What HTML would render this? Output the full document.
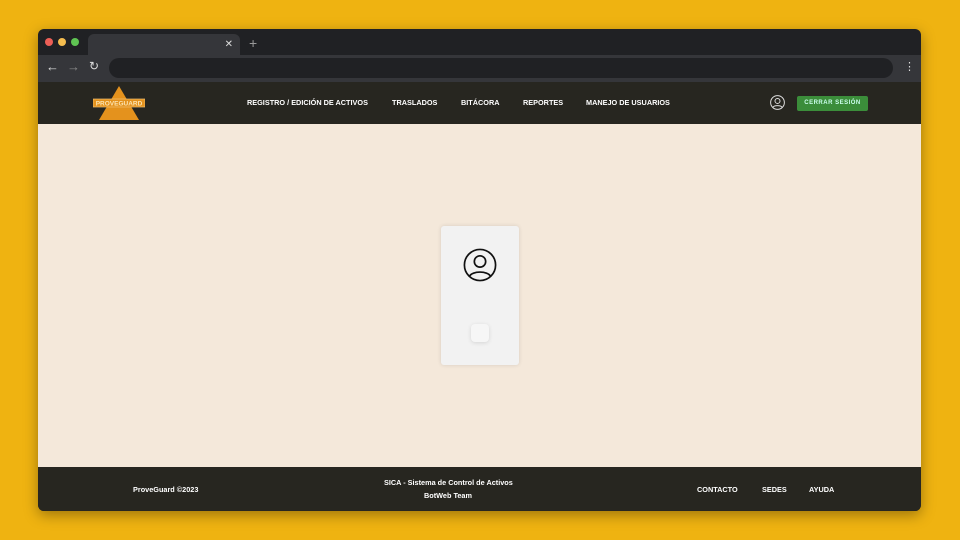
<!DOCTYPE html><html><head><style>
body{margin:0;width:960px;height:540px;background:#efb311;position:relative;overflow:hidden;font-family:"Liberation Sans",sans-serif}
.win{position:absolute;left:38px;top:29px;width:883px;height:482px;background:#202124;border-radius:6px;overflow:hidden;box-shadow:0 4px 14px rgba(0,0,0,.35)}
.tab{position:absolute;left:50px;top:5px;width:152px;height:22px;background:#35363a;border-radius:6px 6px 0 0;color:#ddd;font-size:10px}
.bar{position:absolute;left:0;top:26px;width:883px;height:27px;background:#35363a}
.url{position:absolute;left:71px;top:3px;width:784px;height:20px;background:#202124;border-radius:10px}
.nav{position:absolute;left:0;top:53px;width:883px;height:42px;background:#272620;color:#fff;font-weight:bold;font-size:7.3px}
.nav span{position:absolute;top:16px}
.main{position:absolute;left:0;top:95px;width:883px;height:343px;background:#f4e8da}
.foot{position:absolute;left:0;top:438px;width:883px;height:44px;background:#272620;color:#fff;font-weight:bold;font-size:7.3px}
.foot span{position:absolute}
</style></head><body><div class="win">
<div style="position:absolute;left:7px;top:9px;width:8px;height:8px;border-radius:50%;background:#ed5f57"></div>
<div style="position:absolute;left:20px;top:9px;width:8px;height:8px;border-radius:50%;background:#f5bd4f"></div>
<div style="position:absolute;left:33px;top:9px;width:8px;height:8px;border-radius:50%;background:#5fc453"></div>
<div class="tab"><span style="position:absolute;right:7px;top:5px">✕</span></div>
<span style="position:absolute;left:211px;top:6px;color:#999;font-size:14px">+</span>
<div class="bar"><span style="position:absolute;left:8px;top:4px;color:#ddd;font-size:13px">←</span><span style="position:absolute;left:29px;top:4px;color:#888;font-size:13px">→</span><span style="position:absolute;left:51px;top:4px;color:#ddd;font-size:12px">↻</span><div class="url"></div><span style="position:absolute;left:866px;top:5px;color:#ddd;font-size:11px">⋮</span></div>
<div class="nav">
<svg style="position:absolute;left:55px;top:3px" width="52" height="36"><polygon points="26,1 6,35 46,35" fill="#e4921d"/><rect x="0" y="14" width="52" height="8" fill="#e4921d" stroke="#f2c070" stroke-width=".7"/><text x="26" y="20.5" font-size="6.5" fill="#fbe3b0" text-anchor="middle" font-family="Liberation Sans">PROVEGUARD</text></svg>
<span style="left:209px">REGISTRO / EDICIÓN DE ACTIVOS</span><span style="left:354px">TRASLADOS</span><span style="left:423px">BITÁCORA</span><span style="left:485px">REPORTES</span><span style="left:548px">MANEJO DE USUARIOS</span>
<svg style="position:absolute;left:732px;top:13px" width="15" height="15" viewBox="0 0 24 24" fill="none" stroke="#ddd" stroke-width="1.6"><circle cx="12" cy="12" r="11"/><circle cx="12" cy="9.5" r="4"/><path d="M4.5 20c2-4 13-4 15 0"/></svg>
<div style="position:absolute;left:759px;top:14px;width:71px;height:15px;background:#3b8d3a;border-radius:2px;font-size:6px;color:#cfe;text-align:center;line-height:15px;letter-spacing:.5px">CERRAR SESIÓN</div>
</div>
<div class="main"><div style="position:absolute;left:403px;top:102px;width:78px;height:139px;background:#f2f2f2;border-radius:3px;box-shadow:0 0 4px rgba(0,0,0,.12)">
<svg style="position:absolute;left:22px;top:22px" width="34" height="34" viewBox="0 0 24 24" fill="none" stroke="#111" stroke-width="1.2"><circle cx="12" cy="12" r="11"/><circle cx="12" cy="9.5" r="4"/><path d="M4.5 20c2-4 13-4 15 0"/></svg>
<div style="position:absolute;left:30px;top:98px;width:18px;height:18px;background:#f6f6f6;border-radius:4px;box-shadow:0 1px 4px rgba(0,0,0,.12)"></div></div></div>
<div class="foot"><span style="left:95px;top:18px">ProveGuard ©2023</span><span style="left:346px;top:11px">SICA - Sistema de Control de Activos</span><span style="left:386px;top:24px">BotWeb Team</span><span style="left:659px;top:18px">CONTACTO</span><span style="left:724px;top:18px">SEDES</span><span style="left:771px;top:18px">AYUDA</span></div>
</div></body></html>
